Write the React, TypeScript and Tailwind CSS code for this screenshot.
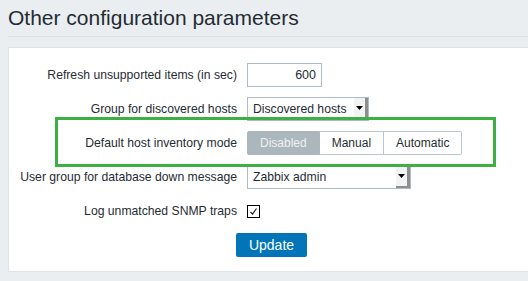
export default function App() {
  return (
    <div className="relative w-[528px] h-[281px] overflow-hidden bg-[#ebeef0] font-['Liberation_Sans',Arial,sans-serif] text-[#1f2c33]">
      <div className="pl-2">
        <h1 className="pt-[6px] pb-[6px] text-[21px] leading-6 border-b border-[#dce2e5]">Other configuration parameters</h1>
      </div>

      <div className="ml-2 mt-[10px] h-[225px] bg-white border border-r-0 border-[#dfe4e7] pt-[15px]">
        <div className="flex flex-col gap-[10px] text-[12.2px]">
          <div className="flex items-center h-6 gap-[10px]">
            <label className="w-[228px] text-right">Refresh unsupported items (in sec)</label>
            <div className="w-[75px] h-6 border border-[#acbbc4] flex items-center justify-end pr-[5px] text-[12.5px]">600</div>
          </div>

          <div className="flex items-center h-6 gap-[10px]">
            <label className="w-[228px] text-right">Group for discovered hosts</label>
            <Select value="Discovered hosts" width="w-[122px]" />
          </div>

          <div className="flex items-center h-6 gap-[10px]">
            <label className="w-[228px] text-right">Default host inventory mode</label>
            <div className="flex h-6 text-[12px]">
              <span className="flex items-center px-[12px] bg-[#acb7bd] text-[#eef1f3] border border-[#acb7bd] rounded-l-[2px]">Disabled</span>
              <span className="flex items-center px-[12px] border border-l-0 border-[#bcc7cd]">Manual</span>
              <span className="flex items-center px-[12px] border border-l-0 border-[#bcc7cd] rounded-r-[2px]">Automatic</span>
            </div>
          </div>

          <div className="flex items-center h-6 gap-[10px]">
            <label className="w-[228px] text-right">User group for database down message</label>
            <Select value="Zabbix admin" width="w-[164px]" />
          </div>

          <div className="flex items-center h-6 gap-[10px]">
            <label className="w-[228px] text-right">Log unmatched SNMP traps</label>
            <div className="w-[13px] h-[13px] border border-black flex items-center justify-center">
              <svg width="9" height="9" viewBox="0 0 9 9">
                <path d="M1.5 5 L3.5 7 L7.5 1.5" fill="none" stroke="#222" strokeWidth="1.2" />
              </svg>
            </div>
          </div>

          <div className="flex h-6 pl-[227px]">
            <button className="w-[71px] h-6 bg-[#0275b8] text-white text-[14px] rounded-[2px]">Update</button>
          </div>
        </div>
      </div>

      <div className="absolute left-[55px] top-[117px] w-[441px] h-[50px] border-[3px] border-[#3cb043]" />
    </div>
  );
}

function Select({ value, width }: { value: string; width: string }) {
  return (
    <div className={`relative ${width} h-6 border border-[#acbbc4] flex items-center pl-[5px] text-[12.2px]`}>
      {value}
      <div className="absolute right-0 top-0 bottom-0 w-[14px] bg-[#f3f3f3] border-r-[3px] border-b-[2px] border-[#8e8e8e] flex items-center justify-center">
        <svg width="7" height="4" viewBox="0 0 7 4">
          <path d="M0 0 H7 L3.5 4 Z" fill="#000" />
        </svg>
      </div>
    </div>
  );
}
